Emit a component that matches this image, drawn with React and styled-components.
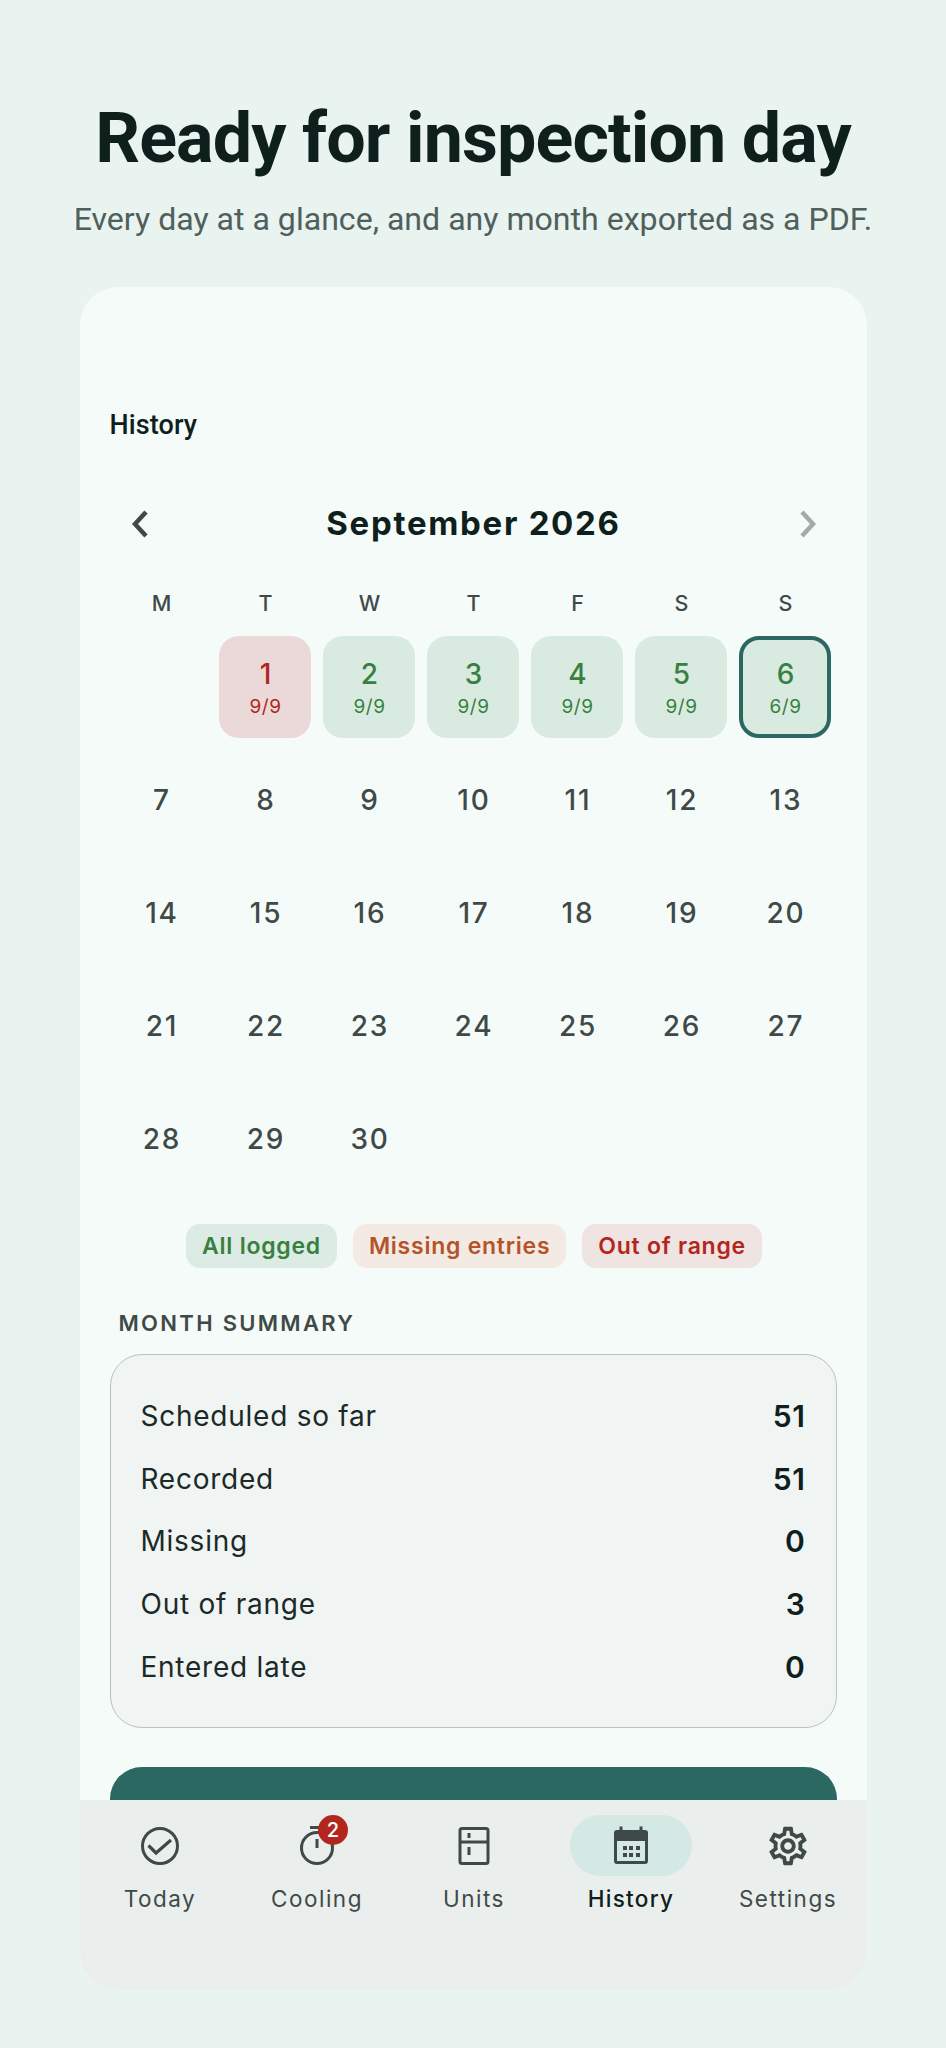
import React from 'react';
import styled, { createGlobalStyle } from 'styled-components';
import { MdOutlineSettings } from 'react-icons/md';

const days = [];
for (let d = 7; d <= 30; d++) days.push(d);

const firstWeek = [
  { day: 1, count: '9/9', tone: 'bad' },
  { day: 2, count: '9/9', tone: 'ok' },
  { day: 3, count: '9/9', tone: 'ok' },
  { day: 4, count: '9/9', tone: 'ok' },
  { day: 5, count: '9/9', tone: 'ok' },
  { day: 6, count: '6/9', tone: 'ok', today: true }
];

const summary = [
  ['Scheduled so far', 51],
  ['Recorded', 51],
  ['Missing', 0],
  ['Out of range', 3],
  ['Entered late', 0]
];

const CheckIcon = () => (
  <svg width="40" height="40" viewBox="0 0 40 40" fill="none" stroke="#3f4a48" strokeWidth="3">
    <circle cx="20" cy="20" r="17.5" />
    <path d="M8.500 19.500l7.500 7.500 15-13" strokeWidth="3.2" />
  </svg>
);

const TimerIcon = () => (
  <svg width="40" height="40" viewBox="0 0 40 40" fill="none" stroke="#3f4a48" strokeWidth="3">
    <circle cx="20" cy="22" r="15.500" />
    <path d="M13 1.500h14M20 13v9" />
  </svg>
);

const FridgeIcon = () => (
  <svg width="40" height="40" viewBox="0 0 40 40" fill="none" stroke="#3f4a48" strokeWidth="3">
    <rect x="6" y="2.500" width="28" height="35" rx="2" />
    <path d="M6 16h28M15 7v5M15 21v8" />
  </svg>
);

const CalendarIcon = () => (
  <svg width="40" height="40" viewBox="0 0 40 40" fill="none">
    <path
      fill="#3f4a48"
      d="M8.500 0.500h3V4h17V0.500h3V4H34a3 3 0 0 1 3 3v28a3 3 0 0 1-3 3H6a3 3 0 0 1-3-3V7a3 3 0 0 1 3-3h2.500z"
    />
    <rect x="6" y="15" width="28" height="20" fill="#d4e9e3" />
    <g fill="#3f4a48">
      <rect x="12" y="20" width="4" height="4" />
      <rect x="18" y="20" width="4" height="4" />
      <rect x="25" y="20" width="4" height="4" />
      <rect x="12" y="27" width="4" height="4" />
      <rect x="18" y="27" width="4" height="4" />
      <rect x="25" y="27" width="4" height="4" />
    </g>
  </svg>
);

const Chevron = ({ dir, color }) => (
  <svg width="20" height="30" viewBox="0 0 20 30" fill="none" stroke={color} strokeWidth="4.500">
    <path d={dir === 'left' ? 'M16 3L5 15l11 12' : 'M4 3l11 12L4 27'} />
  </svg>
);

const navItems = [
  { label: 'Today', icon: <CheckIcon /> },
  { label: 'Cooling', icon: <TimerIcon />, badge: 2 },
  { label: 'Units', icon: <FridgeIcon /> },
  { label: 'History', icon: <CalendarIcon />, active: true },
  { label: 'Settings', icon: <MdOutlineSettings size={46} color="#3f4a48" /> }
];

export default function App() {
  return (
    <>
      <GlobalStyle />
      <Page>
        <Title>Ready for inspection day</Title>
        <Subtitle>Every day at a glance, and any month exported as a PDF.</Subtitle>
        <Phone>
          <Content>
            <ScreenTitle>History</ScreenTitle>
            <MonthRow>
              <Chevron dir="left" color="#3f4a48" />
              <MonthName>September 2026</MonthName>
              <Chevron dir="right" color="#a3aba9" />
            </MonthRow>
            <Grid>
              {['M', 'T', 'W', 'T', 'F', 'S', 'S'].map((d, i) => (
                <Weekday key={i}>{d}</Weekday>
              ))}
              <span />
              {firstWeek.map(c => (
                <LoggedDay key={c.day} $tone={c.tone} $today={c.today}>
                  <strong>{c.day}</strong>
                  <small>{c.count}</small>
                </LoggedDay>
              ))}
              {days.map(d => (
                <PlainDay key={d}>{d}</PlainDay>
              ))}
            </Grid>
            <Legend>
              <Chip $fg="#37803f" $bg="#dcebe3">All logged</Chip>
              <Chip $fg="#b5532a" $bg="#f3ebe3">Missing entries</Chip>
              <Chip $fg="#b3261e" $bg="#efe4e2">Out of range</Chip>
            </Legend>
            <SectionLabel>MONTH SUMMARY</SectionLabel>
            <SummaryCard>
              {summary.map(([label, value]) => (
                <SummaryRow key={label}>
                  <span>{label}</span>
                  <b>{value}</b>
                </SummaryRow>
              ))}
            </SummaryCard>
            <ExportButton />
          </Content>
          <Nav>
            {navItems.map(item => (
              <NavItem key={item.label} $active={item.active}>
                <IconPill $active={item.active}>
                  {item.icon}
                  {item.badge && <Badge>{item.badge}</Badge>}
                </IconPill>
                <span>{item.label}</span>
              </NavItem>
            ))}
          </Nav>
        </Phone>
      </Page>
    </>
  );
}

const GlobalStyle = createGlobalStyle`
  * { box-sizing: border-box; }
  html, body { margin: 0; background: #e9f3f0; }
`;

const Page = styled.div`
  height: 2048px;
  padding-top: 96px;
  display: flex;
  flex-direction: column;
  align-items: center;
  font-family: 'Roboto', sans-serif;
  overflow: hidden;
`;

const Title = styled.h1`
  margin: 0;
  font-size: 70px;
  line-height: 84px;
  font-weight: 700;
  letter-spacing: -0.9px;
  color: #0f1f1c;
  white-space: nowrap;
`;

const Subtitle = styled.p`
  margin: 18px 0 0;
  font-size: 32.100px;
  line-height: 42px;
  color: #4f605c;
  white-space: nowrap;
`;

const Phone = styled.div`
  margin-top: 47px;
  width: 787px;
  height: 1703px;
  border-radius: 38px;
  background: #f5fbf9;
  overflow: hidden;
  display: flex;
  flex-direction: column;
`;

const Content = styled.div`
  height: 1513px;
  flex: none;
  overflow: hidden;
  padding: 122px 30px 0;
  font-family: 'Inter', sans-serif;
`;

const ScreenTitle = styled.div`
  font-family: 'Roboto', sans-serif;
  font-size: 27px;
  line-height: 32px;
  font-weight: 500;
  letter-spacing: 0.1px;
  color: #0f1f1c;
`;

const MonthRow = styled.div`
  margin-top: 62px;
  height: 40px;
  padding: 0 19px 0 20px;
  display: flex;
  align-items: center;
  justify-content: space-between;
  svg {
    margin-top: 2px;
  }
`;

const MonthName = styled.div`
  font-size: 33px;
  font-weight: 700;
  letter-spacing: 1.7px;
  color: #0f1f1c;
`;

const Grid = styled.div`
  margin-top: 42px;
  display: grid;
  grid-template-columns: repeat(7, 92px);
  grid-template-rows: 39.500px;
  grid-auto-rows: 102px;
  column-gap: 12px;
  row-gap: 11px;
  justify-content: center;
`;

const Weekday = styled.div`
  height: 36px;
  font-size: 21.500px;
  font-weight: 500;
  padding-left: 1px;
  color: #3f4a48;
  display: flex;
  justify-content: center;
  align-items: center;
`;

const LoggedDay = styled.div`
  border-radius: 20px;
  background: ${p => (p.$tone === 'bad' ? '#ead9d8' : '#d9eae1')};
  color: ${p => (p.$tone === 'bad' ? '#b3261e' : '#37803f')};
  border: ${p => (p.$today ? '4px solid #2c6862' : 'none')};
  display: flex;
  flex-direction: column;
  align-items: center;
  justify-content: center;
  gap: 4px;
  padding: 2px 0 0 1px;
  strong {
    font-size: 28px;
    line-height: 34px;
    font-weight: 500;
  }
  small {
    font-size: 19px;
    line-height: 24px;
    letter-spacing: 0.6px;
  }
`;

const PlainDay = styled.div`
  font-size: 28px;
  font-weight: 500;
  letter-spacing: 1.800px;
  padding-left: 2px;
  color: #3f4a48;
  display: flex;
  align-items: center;
  justify-content: center;
`;

const Legend = styled.div`
  margin-top: 34.500px;
  display: flex;
  justify-content: center;
  gap: 16px;
  padding-left: 2px;
`;

const Chip = styled.div`
  height: 44px;
  padding: 0 16px;
  border-radius: 14px;
  background: ${p => p.$bg};
  color: ${p => p.$fg};
  font-size: 23px;
  font-weight: 600;
  letter-spacing: 0.75px;
  display: flex;
  align-items: center;
`;

const SectionLabel = styled.div`
  margin: 40px 0 0 9px;
  font-size: 22px;
  line-height: 30px;
  font-weight: 600;
  letter-spacing: 2.300px;
  color: #3f4a48;
`;

const SummaryCard = styled.div`
  margin-top: 16px;
  height: 374px;
  padding: 29.500px 30px 27.500px;
  border: 1.500px solid #b9c2c0;
  border-radius: 32px;
  background: #f0f5f4;
  display: flex;
  flex-direction: column;
`;

const SummaryRow = styled.div`
  height: 62.800px;
  flex: none;
  display: flex;
  align-items: center;
  justify-content: space-between;
  font-size: 28px;
  font-weight: 380;
  letter-spacing: 0.75px;
  color: #1b2a27;
  b {
    font-weight: 600;
    font-size: 30px;
    letter-spacing: 0.6px;
    color: #0f1f1c;
  }
`;

const ExportButton = styled.div`
  margin-top: 39px;
  height: 90px;
  border-radius: 32px;
  background: #2c6862;
`;

const Nav = styled.nav`
  flex: 1;
  background: #eaeeed;
  padding: 15px 0 0 2px;
  display: grid;
  grid-template-columns: repeat(5, 1fr);
  font-family: 'Inter', sans-serif;
`;

const NavItem = styled.div`
  display: flex;
  flex-direction: column;
  align-items: center;
  font-size: 22.500px;
  line-height: 30px;
  letter-spacing: ${p => (p.$active ? '1.3px' : '1.5px')};
  font-weight: ${p => (p.$active ? 450 : 400)};
  color: ${p => (p.$active ? '#0f1f1c' : '#3f4a48')};
`;

const IconPill = styled.div`
  position: relative;
  width: 122px;
  height: 61px;
  margin-bottom: 8px;
  border-radius: 31px;
  background: ${p => (p.$active ? '#d4e9e3' : 'transparent')};
  display: flex;
  align-items: center;
  justify-content: center;
`;

const Badge = styled.div`
  position: absolute;
  top: 0;
  left: 62px;
  width: 30px;
  height: 30px;
  border-radius: 50%;
  background: #b3261e;
  color: #fff;
  font-size: 20px;
  font-weight: 500;
  letter-spacing: 0;
  display: flex;
  align-items: center;
  justify-content: center;
`;
